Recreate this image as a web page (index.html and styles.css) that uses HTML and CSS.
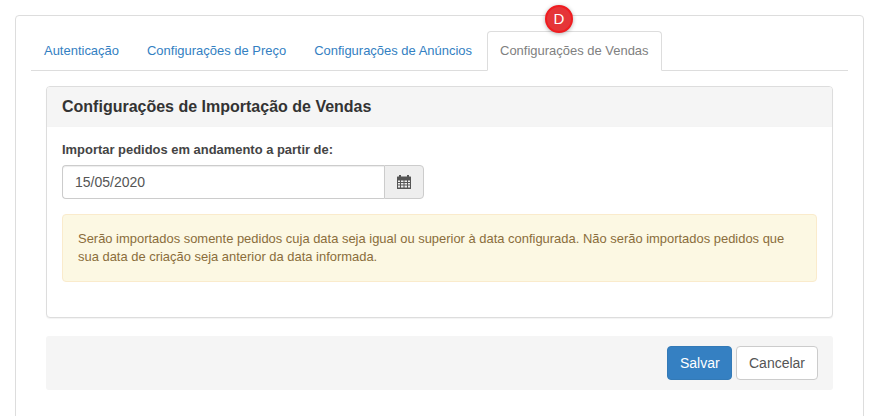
FILE: index.html
```html
<!DOCTYPE html>
<html lang="pt-BR">
<head>
<meta charset="utf-8">
<title>Configurações de Vendas</title>
<link rel="stylesheet" href="styles.css">
</head>
<body>
<main class="card">
  <nav class="tabs">
    <a class="tab" href="#">Autenticação</a>
    <a class="tab" href="#">Configurações de Preço</a>
    <a class="tab" href="#">Configurações de Anúncios</a>
    <a class="tab active" href="#">Configurações de Vendas<span class="badge">D</span></a>
  </nav>
  <div class="content">
    <section class="panel">
      <h2 class="panel-title">Configurações de Importação de Vendas</h2>
      <div class="panel-body">
        <label class="field-label" for="date">Importar pedidos em andamento a partir de:</label>
        <div class="input-group">
          <input class="date-input" id="date" type="text" value="15/05/2020">
          <button class="addon" type="button" aria-label="Calendário">
            <svg width="14" height="14" viewBox="0 0 14 14" class="cal-icon">
              <path fill="#555" fill-rule="evenodd" d="M2 0h2v1.5H10V0h2v1.5h1.5a.5.5 0 0 1 .5.5v11.5a.5.5 0 0 1-.5.5H.5a.5.5 0 0 1-.5-.5V2a.5.5 0 0 1 .5-.5H2zM1 5.5V7h2V5.500zM4 5.500V7h2.500V5.500zM7.500 5.500V7H10V5.500zM11 5.500V7h2V5.500zM1 8v1.500h2V8zM4 8v1.500h2.500V8zM7.500 8v1.500H10V8zM11 8v1.500h2V8zM1 10.500V12.500h2v-2zM4 10.500v2h2.500v-2zM7.500 10.500v2H10v-2zM11 10.500v2h2v-2z"/>
            </svg>
          </button>
        </div>
        <div class="alert">Serão importados somente pedidos cuja data seja igual ou superior à data configurada. Não serão importados pedidos que sua data de criação seja anterior da data informada.</div>
      </div>
    </section>
    <footer class="actions">
      <button class="btn btn-primary" type="button">Salvar</button>
      <button class="btn btn-default" type="button">Cancelar</button>
    </footer>
  </div>
</main>
</body>
</html>
```
FILE: styles.css
```css
* { box-sizing: border-box; }
html, body { margin: 0; height: 416px; overflow: hidden; background: #fff; }
body {
  padding: 15px 10px 0 15px;
  font-family: "Liberation Sans", Arial, sans-serif;
  font-size: 13px;
  line-height: 18px;
  color: #333;
}
.card {
  height: 420px;
  padding: 15px 15px 0;
  border: 1px solid #ddd;
  border-radius: 4px;
  background: #fff;
}
.tabs {
  display: flex;
  gap: 2px;
  height: 40px;
  border-bottom: 1px solid #ddd;
}
.tab {
  position: relative;
  height: 40px;
  padding: 10px 12px;
  border: 1px solid transparent;
  border-radius: 4px 4px 0 0;
  color: #3380c2;
  font-size: 12.98px;
  text-decoration: none;
  white-space: nowrap;
}
.tab.active {
  border-color: #ddd #ddd #fff;
  background: #fff;
  color: #808080;
}
.badge {
  position: absolute;
  top: -27px;
  left: 57px;
  width: 28px;
  height: 28px;
  border-radius: 50%;
  background: #e53538;
  border: 2px solid #f01c20;
  box-shadow: 0 1px 4px rgba(0, 0, 0, .3);
  color: #fff;
  font-size: 15px;
  line-height: 24px;
  text-align: center;
}
.content { padding: 15px 15px 0; }
.panel {
  height: 232px;
  border: 1px solid #ddd;
  border-radius: 4px;
  box-shadow: 0 1px 1px rgba(0, 0, 0, .05);
  background: #fff;
}
.panel-title {
  margin: 0;
  height: 40px;
  padding: 10px 15px;
  border-bottom: 1px solid #f4f4f4;
  border-radius: 3px 3px 0 0;
  background: #f5f5f5;
  font-size: 16px;
  font-weight: bold;
  line-height: 20px;
  color: #333;
}
.panel-body { padding: 14px 15px 0; }
.field-label {
  display: block;
  margin-bottom: 6px;
  font-size: 12.95px;
  font-weight: bold;
  color: #444;
}
.input-group { display: flex; width: 362px; height: 34px; }
.date-input {
  flex: 1;
  min-width: 0;
  padding: 6px 12px;
  border: 1px solid #ccc;
  border-right: 0;
  border-radius: 4px 0 0 4px;
  box-shadow: inset 0 1px 1px rgba(0, 0, 0, .075);
  font: 14px "Liberation Sans", Arial, sans-serif;
  color: #555;
  outline: 0;
}
.addon {
  display: flex;
  align-items: center;
  justify-content: center;
  width: 40px;
  padding: 0;
  border: 1px solid #ccc;
  border-radius: 0 4px 4px 0;
  background: #eee;
}
.alert {
  margin-top: 15px;
  height: 68px;
  padding: 15px;
  border: 1px solid #faebcc;
  border-radius: 4px;
  background: #fcf8e3;
  color: #8a6d3b;
  font-size: 12.95px;
  line-height: 18px;
}
.actions {
  display: flex;
  justify-content: flex-end;
  gap: 4px;
  height: 54px;
  margin-top: 18px;
  padding: 10px 15px;
  border-radius: 3px;
  background: #f5f5f5;
}
.btn {
  height: 34px;
  padding: 6px 12px;
  border: 1px solid transparent;
  border-radius: 4px;
  font: 14px/20px "Liberation Sans", Arial, sans-serif;
}
.btn-primary { width: 65px; background: #3580c2; border-color: #337ab7; color: #fff; }
.btn-default { width: 82px; background: #fff; border-color: #ccc; color: #555; }
```
